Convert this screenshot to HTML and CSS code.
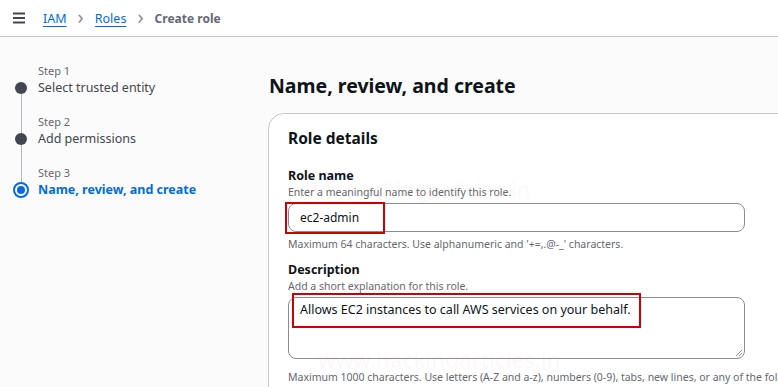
FILE: index.html
```html
<!DOCTYPE html>
<html lang="en">
    <head>
        <title>Create role</title>
        <meta charset="utf-8">
        <link rel="stylesheet" href="styles.css">
    </head>

    <body>
        <header class="topbar">
            <svg class="menu" width="14" height="12" viewBox="0 0 14 12">
                <path d="M1 1.5h12M1 6h12M1 10.5h12" stroke="#424650" stroke-width="2" fill="none"/>
            </svg>
            <nav class="crumbs">
                <a href="#">IAM</a>
                <span class="chev">&#8250;</span>
                <a href="#">Roles</a>
                <span class="chev">&#8250;</span>
                <span class="current">Create role</span>
            </nav>
        </header>

        <div class="page">
            <aside class="side">
                <div class="steps">
                    <div class="step">
                        <span class="dot"></span>
                        <p class="label">Step 1</p>
                        <p class="title">Select trusted entity</p>
                    </div>
                    <div class="step">
                        <span class="dot"></span>
                        <p class="label">Step 2</p>
                        <p class="title">Add permissions</p>
                    </div>
                    <div class="step active">
                        <span class="dot"></span>
                        <p class="label">Step 3</p>
                        <p class="title">Name, review, and create</p>
                    </div>
                </div>
            </aside>

            <main class="content">
                <span class="wm wm-top">www.hackingarticles.in</span>
                <span class="wm wm-bottom">www.hackingarticles.in</span>

                <h1>Name, review, and create</h1>

                <section class="box">
                    <h2>Role details</h2>

                    <div class="field">
                        <label>Role name</label>
                        <p class="hint">Enter a meaningful name to identify this role.</p>
                        <div class="control">
                            <div class="input">ec2-admin</div>
                            <span class="mark mark-name"></span>
                        </div>
                        <p class="hint">Maximum 64 characters. Use alphanumeric and '+=,.@-_' characters.</p>
                    </div>

                    <div class="field">
                        <label>Description</label>
                        <p class="hint">Add a short explanation for this role.</p>
                        <div class="control control-desc">
                            <div class="textarea">Allows EC2 instances to call AWS services on your behalf.
                                <svg class="grip" width="9" height="9" viewBox="0 0 9 9">
                                    <path d="M8 2L2 8M8 5L5 8" stroke="#8c8c94" stroke-width="1"/>
                                </svg>
                            </div>
                            <span class="mark mark-desc"></span>
                        </div>
                        <p class="hint">Maximum 1000 characters. Use letters (A-Z and a-z), numbers (0-9), tabs, new lines, or any of the following characters: _+=,.@-/\[]!#$%^&amp;*()::"'`</p>
                    </div>
                </section>
            </main>
        </div>
    </body>
</html>
```

FILE: styles.css
```css
* {
    font-family: "Noto Sans", sans-serif;
    box-sizing: border-box;
}
body {
    margin: 0px;
    padding: 0px;
    background: #fbfbfb;
    color: #0f141a;
    overflow: hidden;
    height: 387px;
}
p {
    margin: 0px;
}

.topbar {
    height: 37px;
    background: #ffffff;
    border-bottom: solid 1px #c6c6cd;
    display: flex;
    align-items: center;
    padding-left: 12px;
}
.menu {
    margin-right: 17px;
}
.crumbs {
    display: flex;
    align-items: center;
    font-size: 12.5px;
}
.crumbs a {
    color: #006ce0;
    text-decoration: underline;
    text-underline-offset: 3px;
}
.chev {
    color: #8c8c94;
    font-size: 20px;
    margin: -3px 11px 0px 11px;
}
.current {
    color: #656871;
    font-weight: bold;
    font-size: 12px;
}

.page {
    display: flex;
}
.side {
    width: 269px;
    flex-shrink: 0;
    padding: 26px 0px 0px 38px;
}
.steps {
    position: relative;
}
.steps::before {
    content: "";
    position: absolute;
    left: -17px;
    top: 25px;
    height: 100px;
    width: 1px;
    background: #b4b4bb;
}
.step {
    position: relative;
    margin-bottom: 16px;
}
.label {
    font-size: 11px;
    line-height: 15px;
    color: #656871;
}
.title {
    font-size: 12.5px;
    line-height: 20px;
    color: #424650;
}
.dot {
    position: absolute;
    left: -23px;
    top: 19px;
    width: 12px;
    height: 12px;
    border-radius: 50%;
    background: #424650;
}
.active .title {
    color: #006ce0;
    font-weight: bold;
}
.active .dot {
    left: -25px;
    top: 17px;
    width: 16px;
    height: 16px;
    background: #ffffff;
    border: solid 2px #006ce0;
}
.active .dot::after {
    content: "";
    display: block;
    margin: 2px;
    width: 8px;
    height: 8px;
    border-radius: 50%;
    background: #006ce0;
}

.content {
    position: relative;
    padding-top: 36px;
}
h1 {
    font-size: 19.5px;
    font-weight: bold;
    margin: 0px 0px 14px 0px;
    line-height: 26px;
}
.box {
    position: relative;
    width: 760px;
    margin-left: -1px;
    background: #ffffff;
    border: solid 1px #c6c6cd;
    border-radius: 16px;
    padding: 14px 19px 20px 19px;
}
h2 {
    font-size: 15.5px;
    font-weight: bold;
    margin: 0px 0px 19px 0px;
    line-height: 20px;
}
.field {
    margin-bottom: 9px;
}
.field label {
    display: block;
    font-size: 12.5px;
    font-weight: bold;
    line-height: 18px;
}
.hint {
    font-size: 10.5px;
    line-height: 15px;
    color: #656871;
}
.control {
    position: relative;
    width: 457px;
    margin: 3px 0px 5px 0px;
}
.control-desc {
    margin-bottom: 11px;
}
.input {
    height: 29px;
    border: solid 1px #8c8c94;
    border-radius: 8px;
    padding: 4px 11px;
    font-size: 12px;
    line-height: 19px;
}
.textarea {
    position: relative;
    height: 62px;
    border: solid 1px #8c8c94;
    border-radius: 8px;
    padding: 2px 11px;
    font-size: 12.5px;
    line-height: 19px;
}
.grip {
    position: absolute;
    right: 1px;
    bottom: 1px;
}
.mark {
    position: absolute;
    border: solid 2px #d10000;
}
.mark-name {
    left: -3px;
    top: -1px;
    width: 100px;
    height: 32px;
}
.mark-desc {
    left: 4px;
    top: -4px;
    width: 349px;
    height: 35px;
}

.wm {
    position: absolute;
    z-index: 2;
    font-size: 22.5px;
    line-height: 30px;
    color: rgba(240, 110, 90, 0.06);
    pointer-events: none;
}
.wm-top {
    left: 19px;
    top: 138px;
}
.wm-bottom {
    left: 49px;
    top: 308px;
}
```
